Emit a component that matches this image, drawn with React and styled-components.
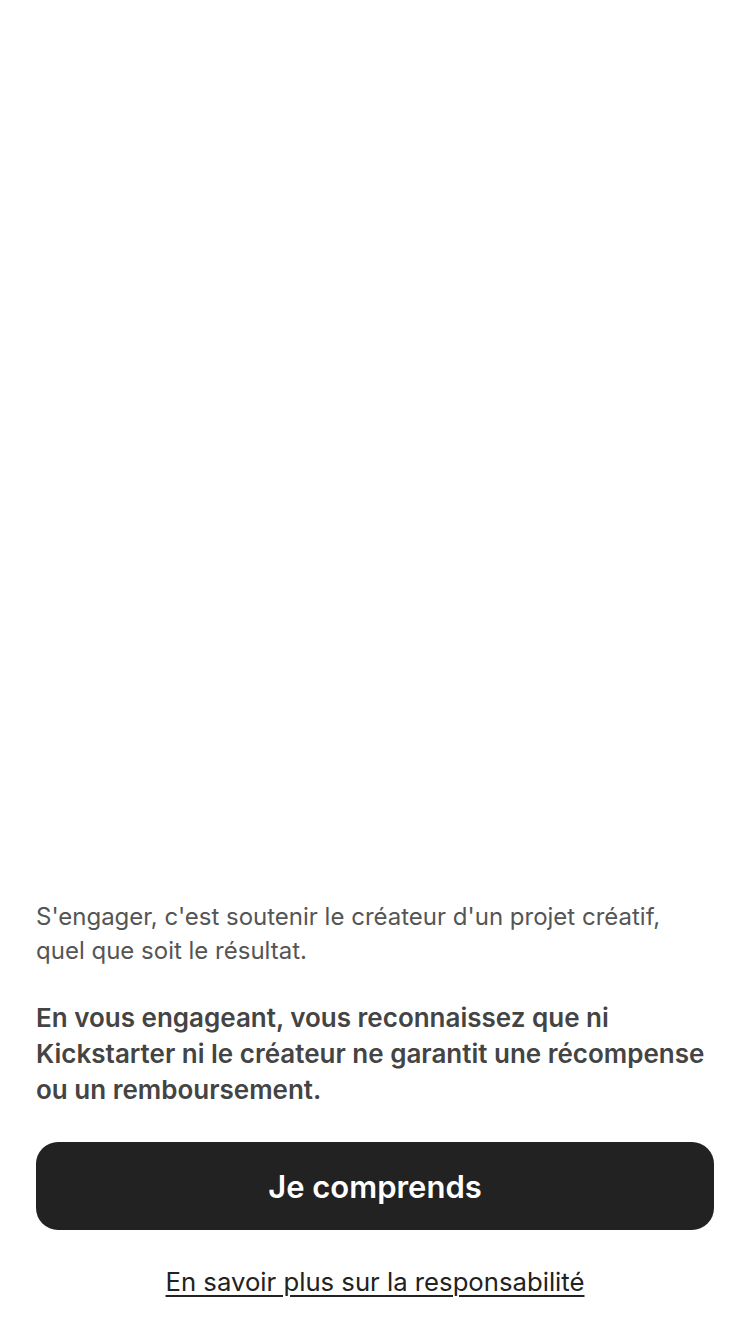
import React from 'react';
import styled, { createGlobalStyle } from 'styled-components';

const GlobalStyle = createGlobalStyle`
  html, body {
    margin: 0;
    padding: 0;
    background: #ffffff;
  }
  body {
    font-family: Inter, Roboto, "Noto Sans", "Liberation Sans", sans-serif;
    -webkit-font-smoothing: antialiased;
  }
`;

const Screen = styled.div`
  display: flex;
  flex-direction: column;
  justify-content: flex-end;
  min-height: 100vh;
  box-sizing: border-box;
  padding: 0 36px 36px;
`;

const Intro = styled.p`
  margin: 0;
  font-size: 24px;
  line-height: 34px;
  color: #555555;
`;

const Notice = styled.p`
  margin: 32px 0 0;
  font-size: 26px;
  line-height: 36px;
  font-weight: 600;
  color: #444444;
`;

const ConfirmButton = styled.button`
  margin-top: 34px;
  height: 88px;
  width: 100%;
  border: none;
  border-radius: 22px;
  background-color: #222222;
  color: #ffffff;
  font-family: inherit;
  font-size: 31px;
  font-weight: 600;
  cursor: pointer;
`;

const LearnMore = styled.a`
  align-self: center;
  margin-top: 36px;
  font-size: 25.7px;
  line-height: 32px;
  color: #222222;
  text-decoration: underline;
  text-decoration-thickness: 1.5px;
  text-underline-offset: 4px;
  cursor: pointer;
`;

const App = () => {
  return (
    <>
      <GlobalStyle />
      <Screen>
        <Intro>
          S'engager, c'est soutenir le créateur d'un projet créatif,
          <br />
          quel que soit le résultat.
        </Intro>
        <Notice>
          En vous engageant, vous reconnaissez que ni
          <br />
          Kickstarter ni le créateur ne garantit une récompense
          <br />
          ou un remboursement.
        </Notice>
        <ConfirmButton>Je comprends</ConfirmButton>
        <LearnMore>En savoir plus sur la responsabilité</LearnMore>
      </Screen>
    </>
  );
};

export default App;
